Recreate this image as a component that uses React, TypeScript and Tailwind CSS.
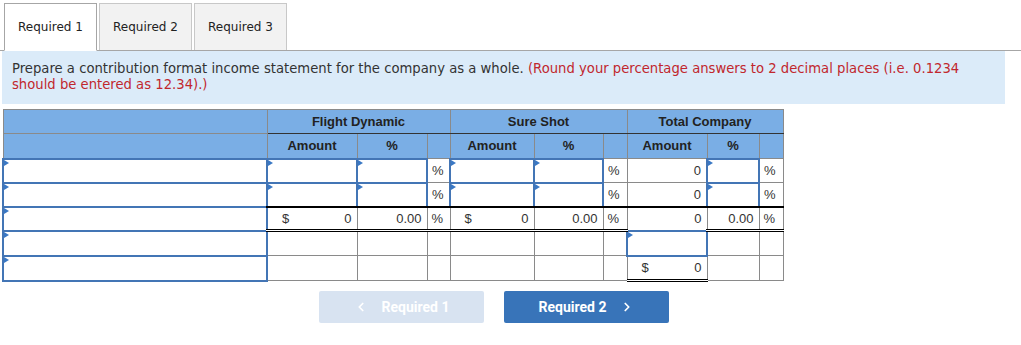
import React from 'react';
import { ChevronLeft, ChevronRight } from 'lucide-react';

// -- small blue corner marker used on editable cells --
const Marker = () => (
  <span className="absolute top-0 left-0 w-0 h-0 border-y-[3px] border-y-transparent border-l-[5px] border-l-[#3a78c4]" />
);

const cellBase = "border border-[#8a8a8a] p-0 h-[24px]";

// editable cell: the blue frame takes the place of the cell border
const InputCell = ({ extra = "" }: { extra?: string }) => (
  <td className={`relative border-2 border-[#4375b5] p-0 h-[24px] bg-white ${extra}`}>
    <Marker />
  </td>
);

const Empty = ({ extra = "" }: { extra?: string }) => <td className={`${cellBase} ${extra}`} />;

const Pct = ({ extra = "" }: { extra?: string }) => (
  <td className={`${cellBase} pl-[4px] text-left ${extra}`}>%</td>
);

const Num = ({ value, dollar = false, extra = "" }: { value: string; dollar?: boolean; extra?: string }) => (
  <td className={`${cellBase} ${extra}`}>
    <div className="flex justify-between items-center pl-[14px] pr-[5px]">
      <span>{dollar ? '$' : ''}</span>
      <span>{value}</span>
    </div>
  </td>
);

const Tabs = () => {
  const tabs = ["Required 1", "Required 2", "Required 3"];
  return (
    <div className="flex gap-[2px] pl-[4px] pt-[3px] relative z-10">
      {tabs.map((t, i) => (
        <div
          key={t}
          className={
            i === 0
              ? "w-[93px] h-[48px] flex items-center justify-center bg-white border border-[#a6a6a6] border-b-white text-[12px] text-[#222]"
              : "w-[93px] h-[47px] flex items-center justify-center bg-[#f2f2f2] border border-[#c8c8c8] border-b-0 text-[12px] text-[#222]"
          }
        >
          {t}
        </div>
      ))}
    </div>
  );
};

export default function App() {
  const top = "border-t-2 border-t-black";
  const dbl = "border-b-[3px] border-b-black border-double";

  return (
    <div className="w-[1021px] h-[345px] bg-white" style={{ fontFamily: '"DejaVu Sans", Verdana, sans-serif' }}>
      <Tabs />

      {/* instructions banner */}
      <div className="border-t border-[#a6a6a6] -mt-px">
        <div className="ml-[2px] w-[1003px] bg-[#dbebf9] px-[10px] pt-[10px] pb-[11px] text-[13.2px] leading-[16px] text-[#333]">
          Prepare a contribution format income statement for the company as a whole.{' '}
          <span className="text-[#c1272d]">
            (Round your percentage answers to 2 decimal places (i.e. 0.1234 should be entered as 12.34).)
          </span>
        </div>
      </div>

      {/* statement table */}
      <div className="ml-[2px] mt-[5px]" style={{ fontFamily: '"Liberation Sans", Arial, sans-serif' }}>
        <table className="table-fixed border-collapse border border-[#808080] text-[13px] text-[#333]">
          <colgroup>
            <col className="w-[264px]" />
            <col className="w-[90px]" />
            <col className="w-[70px]" />
            <col className="w-[23px]" />
            <col className="w-[84px]" />
            <col className="w-[69px]" />
            <col className="w-[24px]" />
            <col className="w-[80px]" />
            <col className="w-[52px]" />
            <col className="w-[24px]" />
          </colgroup>
          <thead className="bg-[#7aaee5] font-bold text-[#222]">
            <tr>
              <th className={cellBase} />
              <th colSpan={3} className={`${cellBase} border-b-[#333]`}>Flight Dynamic</th>
              <th colSpan={3} className={`${cellBase} border-b-[#333]`}>Sure Shot</th>
              <th colSpan={3} className={`${cellBase} border-b-[#333]`}>Total Company</th>
            </tr>
            <tr className="h-[25px]">
              <th className={cellBase} />
              <th className={cellBase}>Amount</th>
              <th className={cellBase}>%</th>
              <th className={cellBase} />
              <th className={cellBase}>Amount</th>
              <th className={cellBase}>%</th>
              <th className={cellBase} />
              <th className={cellBase}>Amount</th>
              <th className={cellBase}>%</th>
              <th className={cellBase} />
            </tr>
          </thead>
          <tbody className="bg-white">
            {[0, 1].map(r => (
              <tr key={r}>
                <InputCell />
                <InputCell />
                <InputCell />
                <Pct />
                <InputCell />
                <InputCell />
                <Pct />
                <Num value="0" />
                <InputCell />
                <Pct />
              </tr>
            ))}
            <tr>
              <InputCell />
              <Num value="0" dollar extra={`${top} ${dbl}`} />
              <Num value="0.00" extra={`${top} ${dbl}`} />
              <Pct extra={`${top} ${dbl}`} />
              <Num value="0" dollar extra={`${top} ${dbl}`} />
              <Num value="0.00" extra={`${top} ${dbl}`} />
              <Pct extra={`${top} ${dbl}`} />
              <Num value="0" extra={top} />
              <Num value="0.00" extra={`${top} ${dbl}`} />
              <Pct extra={`${top} ${dbl}`} />
            </tr>
            <tr className="h-[25px]">
              <InputCell />
              <Empty /><Empty /><Empty /><Empty /><Empty /><Empty />
              <InputCell />
              <Empty /><Empty />
            </tr>
            <tr className="h-[25px]">
              <InputCell />
              <Empty /><Empty /><Empty /><Empty /><Empty /><Empty />
              <Num value="0" dollar extra={dbl} />
              <Empty /><Empty />
            </tr>
          </tbody>
        </table>
      </div>

      {/* navigation buttons */}
      <div className="flex gap-[20px] ml-[319px] mt-[9px]" style={{ fontFamily: 'Roboto, Arial, sans-serif' }}>
        <button className="w-[165px] h-[32px] rounded-[2px] bg-[#d8e3f1] text-white font-bold text-[14px] flex items-center justify-center gap-[14px]">
          <ChevronLeft size={14} strokeWidth={3} />
          Required 1
        </button>
        <button className="w-[165px] h-[32px] rounded-[2px] bg-[#3874b9] text-white font-bold text-[14px] flex items-center justify-center gap-[14px]">
          Required 2
          <ChevronRight size={14} strokeWidth={3} />
        </button>
      </div>
    </div>
  );
}
